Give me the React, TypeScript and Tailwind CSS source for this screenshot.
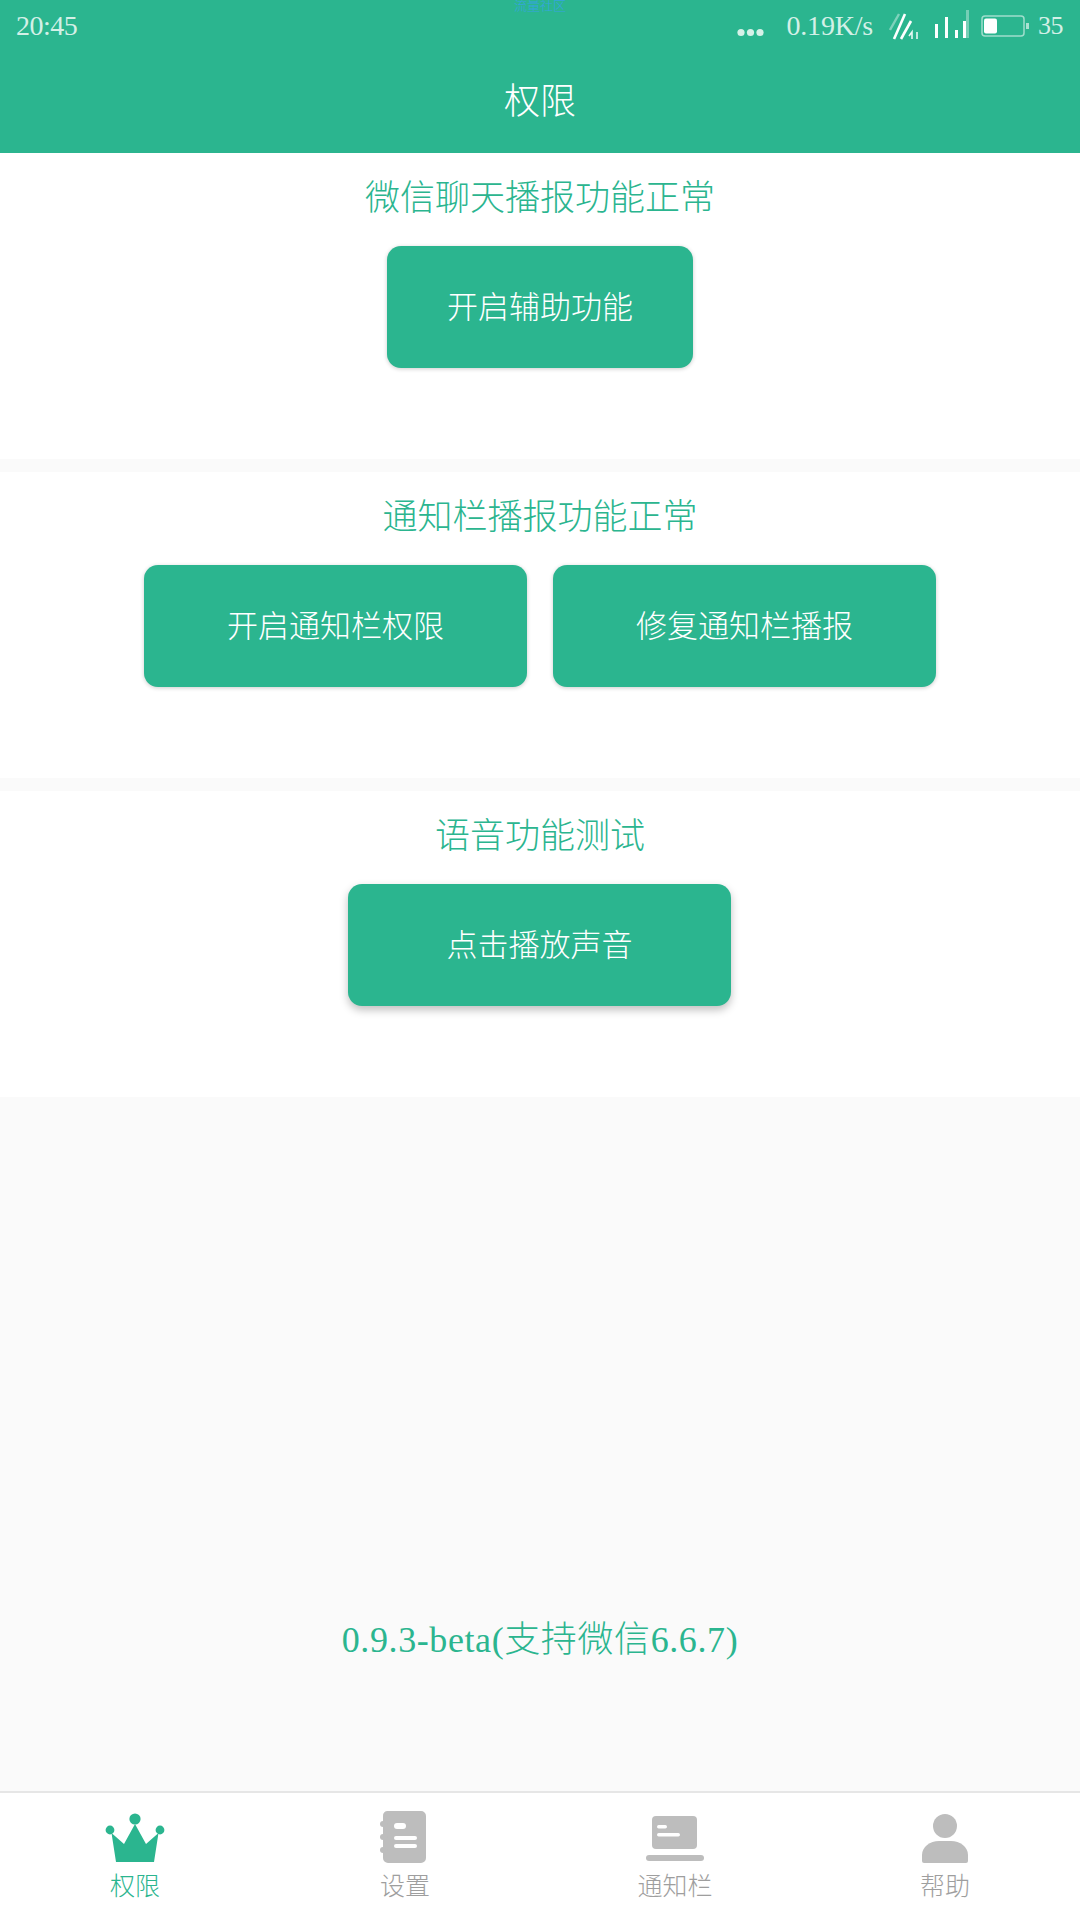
const font = "font-['Liberation_Serif','Noto_Sans_CJK_SC',serif] font-light";

function Section({ title, children }: { title: string; children: React.ReactNode }) {
  return (
    <section className="h-[306px] bg-white flex flex-col items-center pt-[16px]">
      <h2 className="h-[56px] leading-[60px] text-[35px] font-light text-[#2bb58f]">{title}</h2>
      <div className="flex gap-[26px] mt-[21px]">{children}</div>
    </section>
  );
}

function Btn({ label, shadow }: { label: string; shadow?: boolean }) {
  return (
    <button
      className={`w-[383px] h-[122px] pt-[2px] rounded-[14px] bg-[#2bb58f] text-white text-[31px] font-light ${
        shadow ? 'shadow-[0_4px_8px_rgba(0,0,0,0.25)] mr-[1px]' : 'shadow-[0_1px_4px_rgba(0,0,0,0.2)]'
      }`}
    >
      {label}
    </button>
  );
}

function StatusBar() {
  return (
    <div className="relative h-[50px] flex items-center justify-between pl-[16px] pr-[17px] text-[#d4f0e7] text-[28px] pt-[1px]">
      <span className="tracking-[-0.5px]">20:45</span>
      <span className="absolute left-[514px] top-[-2px] text-[13px] leading-[16px] text-[#35a4e0]">流量社区</span>
      <div className="flex items-center">
        <svg width="27" height="9" viewBox="0 0 27 9" className="mt-[14px] mr-[23px]" fill="#d6f1e8">
          <circle cx="4" cy="4.5" r="3.6" />
          <circle cx="13.5" cy="4.5" r="3.6" />
          <circle cx="23" cy="4.5" r="3.6" />
        </svg>
        <span className="tracking-[-0.2px]">0.19K/s</span>
        <svg width="32" height="30" viewBox="0 0 32 30" className="ml-[16px]" fill="none">
          <path d="M1 19 L10 3" stroke="#ffffff" strokeOpacity="0.4" strokeWidth="2.4" />
          <path d="M5 28 L16 3" stroke="#ffffff" strokeWidth="2.6" />
          <path d="M12 28 L22 10" stroke="#ffffff" strokeWidth="2.6" />
          <path d="M23 28 V21 L20 25 M28 21 V28" stroke="#e8f8f3" strokeWidth="1.6" />
        </svg>
        <svg width="34" height="30" viewBox="0 0 34 30" className="ml-[14px] -mt-[2px]" fill="#ffffff">
          <rect x="0" y="14" width="3" height="14" />
          <rect x="10" y="7" width="3" height="21" />
          <rect x="20" y="20" width="3" height="8" />
          <rect x="28" y="11" width="3" height="17" />
          <rect x="31" y="0" width="3" height="28" opacity="0.35" />
        </svg>
        <svg width="48" height="22" viewBox="0 0 48 22" className="ml-[12px] mt-[1px]" fill="none">
          <rect x="1" y="1" width="42" height="20" rx="3" stroke="#ffffff" strokeOpacity="0.55" strokeWidth="1.5" />
          <rect x="45" y="8" width="3" height="6" fill="#ffffff" fillOpacity="0.6" />
          <rect x="3" y="3.5" width="13" height="15" rx="2" fill="#ffffff" />
        </svg>
        <span className="ml-[9px] tracking-[-0.5px] text-[26px]">35</span>
      </div>
    </div>
  );
}

const tabs = [
  {
    label: '权限',
    active: true,
    icon: (
      <svg width="60" height="50" viewBox="0 0 60 50" fill="#2bb58f">
        <circle cx="30" cy="6" r="5.6" />
        <circle cx="5" cy="17" r="4.4" />
        <circle cx="55" cy="17" r="4.4" />
        <path d="M30 11 L41 31 L53.5 20 L49 49 L11 49 L6.5 20 L19 31 Z" />
      </svg>
    ),
  },
  {
    label: '设置',
    icon: (
      <svg width="46" height="52" viewBox="0 0 46 52" fill="#bdbdbd" className="-ml-[4px]">
        <path d="M7 0 H41 a5 5 0 0 1 5 5 V47 a5 5 0 0 1 -5 5 H8 a5 5 0 0 1 -5 -5 V5 a5 5 0 0 1 4 -5 Z" />
        <rect x="0" y="10" width="8" height="6" rx="3" />
        <rect x="0" y="23" width="8" height="6" rx="3" />
        <rect x="0" y="36" width="8" height="6" rx="3" />
        <rect x="14" y="12" width="12" height="6" rx="3" fill="#ffffff" />
        <rect x="14" y="25" width="23" height="4" rx="2" fill="#ffffff" />
        <rect x="14" y="33" width="23" height="4" rx="2" fill="#ffffff" />
      </svg>
    ),
  },
  {
    label: '通知栏',
    icon: (
      <svg width="58" height="46" viewBox="0 0 58 46" fill="#bdbdbd" className="mb-[1px]">
        <rect x="6" y="0" width="45" height="33" rx="4" />
        <rect x="0" y="39" width="58" height="6" rx="3" />
        <rect x="11" y="9" width="10" height="3.5" rx="1.7" fill="#ffffff" />
        <rect x="11" y="17" width="23" height="3.5" rx="1.7" fill="#ffffff" />
      </svg>
    ),
  },
  {
    label: '帮助',
    icon: (
      <svg width="46" height="49" viewBox="0 0 46 49" fill="#bdbdbd" className="-ml-[1px]">
        <circle cx="23" cy="12" r="12" />
        <path d="M0 47 V41 C0 33 8 27 17 27 H29 C38 27 46 33 46 41 V47 a2 2 0 0 1 -2 2 H2 a2 2 0 0 1 -2 -2 Z" />
      </svg>
    ),
  },
];

export default function App() {
  return (
    <div className={`${font} w-[1080px] h-[1920px] flex flex-col bg-[#fafafa]`}>
      <header className="h-[153px] bg-[#2bb58f]">
        <StatusBar />
        <h1 className="h-[103px] text-center leading-[105px] text-[36px] font-light text-white">权限</h1>
      </header>

      <Section title="微信聊天播报功能正常">
        <div className="[&>button]:w-[306px]">
          <Btn label="开启辅助功能" />
        </div>
      </Section>
      <div className="h-[13px]" />
      <Section title="通知栏播报功能正常">
        <Btn label="开启通知栏权限" />
        <Btn label="修复通知栏播报" />
      </Section>
      <div className="h-[13px]" />
      <Section title="语音功能测试">
        <Btn label="点击播放声音" shadow />
      </Section>

      <div className="flex-1 flex items-end justify-center pb-[126px]">
        <p className="text-[36px] leading-[50px] font-light tracking-[0.6px] text-[#2bb58f]">0.9.3-beta(支持微信6.6.7)</p>
      </div>

      <nav className="h-[129px] border-t-2 border-[#e6e6e6] bg-white grid grid-cols-4">
        {tabs.map(t => (
          <div key={t.label} className="flex flex-col items-center">
            <div className="h-[70px] flex items-end justify-center">{t.icon}</div>
            <span className={`mt-[8px] text-[25px] leading-[32px] ${t.active ? 'text-[#2bb58f]' : 'text-[#9e9e9e]'}`}>
              {t.label}
            </span>
          </div>
        ))}
      </nav>
    </div>
  );
}
